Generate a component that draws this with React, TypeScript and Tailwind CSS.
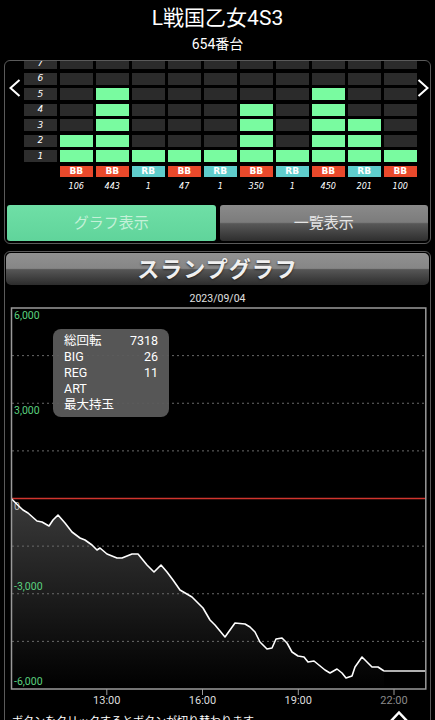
import React from "react";

const FONT = { fontFamily: 'Roboto, "Noto Sans CJK JP", sans-serif' };

const rows = [7, 6, 5, 4, 3, 2, 1];
const cols = [
  { n: 2, t: "BB", v: "106" },
  { n: 5, t: "BB", v: "443" },
  { n: 1, t: "RB", v: "1" },
  { n: 1, t: "BB", v: "47" },
  { n: 1, t: "RB", v: "1" },
  { n: 4, t: "BB", v: "350" },
  { n: 1, t: "RB", v: "1" },
  { n: 5, t: "BB", v: "450" },
  { n: 3, t: "RB", v: "201" },
  { n: 1, t: "BB", v: "100" },
];

// slump line, page coordinates
const pts: [number, number][] = [
  [11.7, 499], [16.7, 504], [23, 510], [28, 513], [37, 521], [42, 522], [49, 526],
  [53, 520], [58, 515], [65, 523], [72, 532], [80, 538], [85, 540], [92, 545],
  [97, 550], [100, 548], [107, 554], [117, 558], [122, 558], [132, 554], [138, 554],
  [147, 565], [154, 572], [161, 565], [167, 572], [173, 580], [180, 590], [192, 597],
  [203, 608], [210, 620], [215, 625], [225, 637], [235, 623], [245, 624], [250, 627],
  [255, 632], [260, 642], [267, 649], [272, 648], [276, 639], [282, 638], [287, 643],
  [292, 652], [298, 656], [304, 657], [308, 662], [314, 661], [325, 670], [330, 673],
  [337, 669], [342, 673], [346, 678], [352, 676], [355, 667], [362, 657], [372, 667],
  [378, 667], [384, 671],
];

const TOP = 308;
const BOTTOM = 689;
const STEP = (BOTTOM - TOP) / 8;
const ticks = [
  { x: 106.8, l: "13:00", c: "#dddddd" },
  { x: 202.5, l: "16:00", c: "#dddddd" },
  { x: 298.3, l: "19:00", c: "#dddddd" },
  { x: 394, l: "22:00", c: "#8a8a8a" },
];
const yLabels = [
  { y: 319, l: "6,000", c: "#5bd17f" },
  { y: 414, l: "3,000", c: "#5bd17f" },
  { y: 510, l: "0", c: "#b5b5b5" },
  { y: 590, l: "-3,000", c: "#5bd17f" },
  { y: 685, l: "-6,000", c: "#5bd17f" },
];

function Arrow({ dir }: { dir: "l" | "r" }) {
  return (
    <svg width="12" height="18" viewBox="0 0 12 18" className="block">
      <polyline
        points={dir === "l" ? "10.5,1 1.5,9 10.5,17" : "1.5,1 10.5,9 1.5,17"}
        fill="none"
        stroke="#fff"
        strokeWidth="2"
      />
    </svg>
  );
}

function BarPanel() {
  return (
    <div className="flex h-[144px] items-start overflow-hidden">
      <div className="flex w-[19px] justify-center pt-[18px] pl-[1px]">
        <Arrow dir="l" />
      </div>
      <div className="-mt-[4px] grid grid-cols-[repeat(11,32.5px)] content-start gap-x-[3.5px] gap-y-[3.5px]">
        {rows.map((r) => (
          <React.Fragment key={r}>
            <div className="flex h-[12px] items-center justify-center bg-[#2d2d2d] text-[9px] italic leading-none text-white" style={{ fontFamily: '"DejaVu Sans", sans-serif' }}>
              {r}
            </div>
            {cols.map((c, i) => (
              <div key={i} className={c.n >= r ? "h-[12px] bg-[#79fba0]" : "h-[12px] bg-[#2b2b2b]"} />
            ))}
          </React.Fragment>
        ))}
        <div className="h-[11px]" />
        {cols.map((c, i) => (
          <div
            key={i}
            className={
              "flex h-[11px] items-center justify-center text-[9px] font-bold leading-none text-white " +
              (c.t === "BB" ? "bg-[#e9492b]" : "bg-[#5fcdcc]")
            }
            style={{ fontFamily: '"DejaVu Sans", sans-serif' }}
          >
            {c.t}
          </div>
        ))}
        <div className="h-[12px]" />
        {cols.map((c, i) => (
          <div key={i} className="flex h-[12px] items-center justify-center text-[9px] italic leading-none text-white" style={{ fontFamily: '"DejaVu Sans Condensed", "DejaVu Sans", sans-serif' }}>
            {c.v}
          </div>
        ))}
      </div>
      <div className="flex flex-1 justify-center pt-[18px]">
        <Arrow dir="r" />
      </div>
    </div>
  );
}

function SlumpChart() {
  const line = pts.map((p, i) => (i ? "L" : "M") + p[0] + "," + p[1]).join(" ");
  const area = line + ` L384,${BOTTOM} L11.7,${BOTTOM} Z`;
  return (
    <svg width="426" height="400" viewBox="5 306 426 400" className="block">
      <defs>
        <linearGradient id="fillg" x1="0" y1="499" x2="0" y2={BOTTOM} gradientUnits="userSpaceOnUse">
          <stop offset="0" stopColor="#3a3a3a" />
          <stop offset="1" stopColor="#000" />
        </linearGradient>
      </defs>
      <path d={area} fill="url(#fillg)" />
      {[1, 2, 3, 5, 6, 7].map((i) => (
        <line key={i} x1="12" x2="425" y1={TOP + i * STEP} y2={TOP + i * STEP} stroke="#6a6a6a" strokeWidth="1" strokeDasharray="2 3" />
      ))}
      {yLabels.map((l) => (
        <text key={l.l} x="14" y={l.y} fontSize="10.5" fill={l.c} fontFamily="Roboto, sans-serif">
          {l.l}
        </text>
      ))}
      <line x1="11.7" x2="425.5" y1={TOP + 4 * STEP} y2={TOP + 4 * STEP} stroke="#d0352e" strokeWidth="1.3" />
      <path d={line} fill="none" stroke="#fff" strokeWidth="1.6" strokeLinejoin="round" />
      <line x1="384" x2="425.5" y1="671" y2="671" stroke="#b0b0b0" strokeWidth="2" />
      <rect x="11.5" y={TOP} width="414.3" height={BOTTOM - TOP} fill="none" stroke="#9a9a9a" strokeWidth="1.5" />
      {ticks.map((t) => (
        <g key={t.l}>
          <line x1={t.x} x2={t.x} y1={BOTTOM} y2={BOTTOM + 6} stroke="#9a9a9a" strokeWidth="1" />
          <text x={t.x} y="704" fontSize="11" fill={t.c} textAnchor="middle" fontFamily="Roboto, sans-serif">
            {t.l}
          </text>
        </g>
      ))}
    </svg>
  );
}

export default function App() {
  return (
    <div className="relative h-[720px] w-[435px] overflow-hidden bg-black" style={FONT}>
      <header className="flex h-[60px] flex-col items-center pt-[5px]">
        <h1 className="text-[21px] leading-[26px] text-white">L戦国乙女4S3</h1>
        <p className="mt-[4px] text-[14px] leading-[18px] text-white">654番台</p>
      </header>

      <section className="mx-[4px] rounded-[6px] border border-[#5a5a5a]">
        <BarPanel />
        <div className="flex gap-[4px] px-[2px] pb-[2px]">
          <button
            type="button"
            className="h-[36px] w-[209px] rounded-[3px] bg-[linear-gradient(to_bottom,#6fdfa6,#60d49b)] text-[15px] text-[#c4f1d8]"
          >
            グラフ表示
          </button>
          <button
            type="button"
            className="h-[36px] w-[209px] rounded-[3px] bg-[linear-gradient(to_bottom,#8a8a8a_0%,#7c7c7c_48%,#585858_52%,#2e2e2e_100%)] text-[15px] text-[#e4e4e4]"
          >
            一覧表示
          </button>
        </div>
      </section>

      <section className="mx-[4px] mt-[7px] h-[600px] rounded-t-[6px] border border-[#5a5a5a]">
        <div className="mx-[1px] mt-[1px] flex h-[32px] items-center justify-center rounded-[5px] bg-[linear-gradient(to_bottom,#919191_0%,#868686_48%,#565656_52%,#2c2c2c_100%)]">
          <span className="text-[22px] font-bold tracking-[1px] text-[#f0f0f0] [text-shadow:0_1px_2px_#222]">スランプグラフ</span>
        </div>
        <p className="pt-[7px] text-center text-[10.5px] leading-[14px] text-[#e0e0e0]">2023/09/04</p>
        <div className="relative">
          <SlumpChart />
          <div className="absolute left-[48px] top-[23px] w-[116px] rounded-[8px] bg-[#5b5b5b]/95 px-[11px] pb-[4px] pt-[4px] text-[12.5px] leading-[16px] text-white">
            <div className="flex justify-between"><span>総回転</span><span>7318</span></div>
            <div className="flex justify-between"><span>BIG</span><span>26</span></div>
            <div className="flex justify-between"><span>REG</span><span>11</span></div>
            <div>ART</div>
            <div>最大持玉</div>
          </div>
        </div>
        <p className="px-[7px] pt-[9px] text-[11px] leading-[14px] text-white">ボタンをクリックするとボタンが切り替わります</p>
      </section>

      <svg width="26" height="16" viewBox="0 0 26 16" className="absolute left-[386px] top-[708px]">
        <polyline points="4,14 13,4.5 22,14" fill="none" stroke="#fff" strokeWidth="2.5" />
      </svg>
    </div>
  );
}
